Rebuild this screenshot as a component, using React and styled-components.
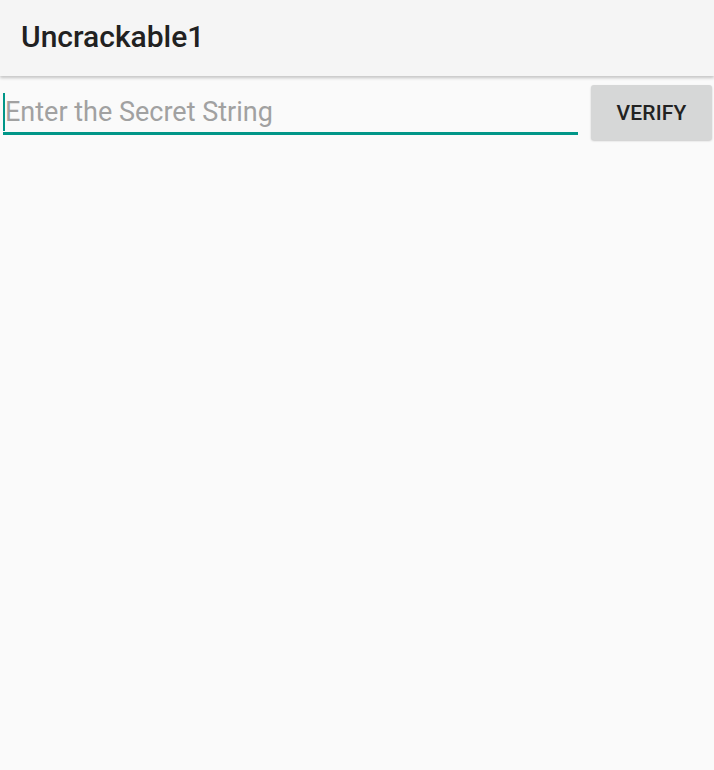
import React from 'react';
import styled, { createGlobalStyle } from 'styled-components';

const Global = createGlobalStyle`
  html, body {
    margin: 0;
    padding: 0;
    background: #fafafa;
    font-family: Roboto, "Noto Sans", sans-serif;
  }
`;

const Screen = styled.div`
  width: 714px;
  height: 770px;
  background: #fafafa;
  overflow: hidden;
`;

const AppBar = styled.header`
  height: 76px;
  background: #f5f5f5;
  box-shadow: 0 2px 3px rgba(0, 0, 0, 0.22);
  display: flex;
  align-items: center;
  padding-left: 21px;
  position: relative;
  z-index: 1;
`;

const Title = styled.h1`
  margin: 0;
  font-size: 30px;
  font-weight: 500;
  color: #212121;
  padding-bottom: 4px;
`;

const Row = styled.div`
  display: flex;
  align-items: flex-start;
  padding: 9px 2px 0 3px;
  gap: 13px;
`;

const Field = styled.div`
  flex: 1;
  height: 40px;
  margin-top: 7px;
  border-bottom: 3px solid #009688;
  display: flex;
  align-items: center;
`;

const Cursor = styled.span`
  width: 2px;
  height: 38px;
  background: #009688;
`;

const Placeholder = styled.span`
  font-size: 27px;
  color: #a1a1a1;
  line-height: 1;
`;

const Button = styled.button`
  width: 121px;
  height: 55px;
  border: none;
  border-radius: 3px;
  background: #d6d7d7;
  box-shadow: 0 1px 2px rgba(0, 0, 0, 0.2);
  font-family: Roboto, sans-serif;
  font-size: 21px;
  font-weight: 500;
  letter-spacing: 0.2px;
  color: #222;
  padding: 0;
`;

export default function App() {
  return (
    <Screen>
      <Global />
      <AppBar>
        <Title>Uncrackable1</Title>
      </AppBar>
      <Row>
        <Field>
          <Cursor />
          <Placeholder>Enter the Secret String</Placeholder>
        </Field>
        <Button>VERIFY</Button>
      </Row>
    </Screen>
  );
}
